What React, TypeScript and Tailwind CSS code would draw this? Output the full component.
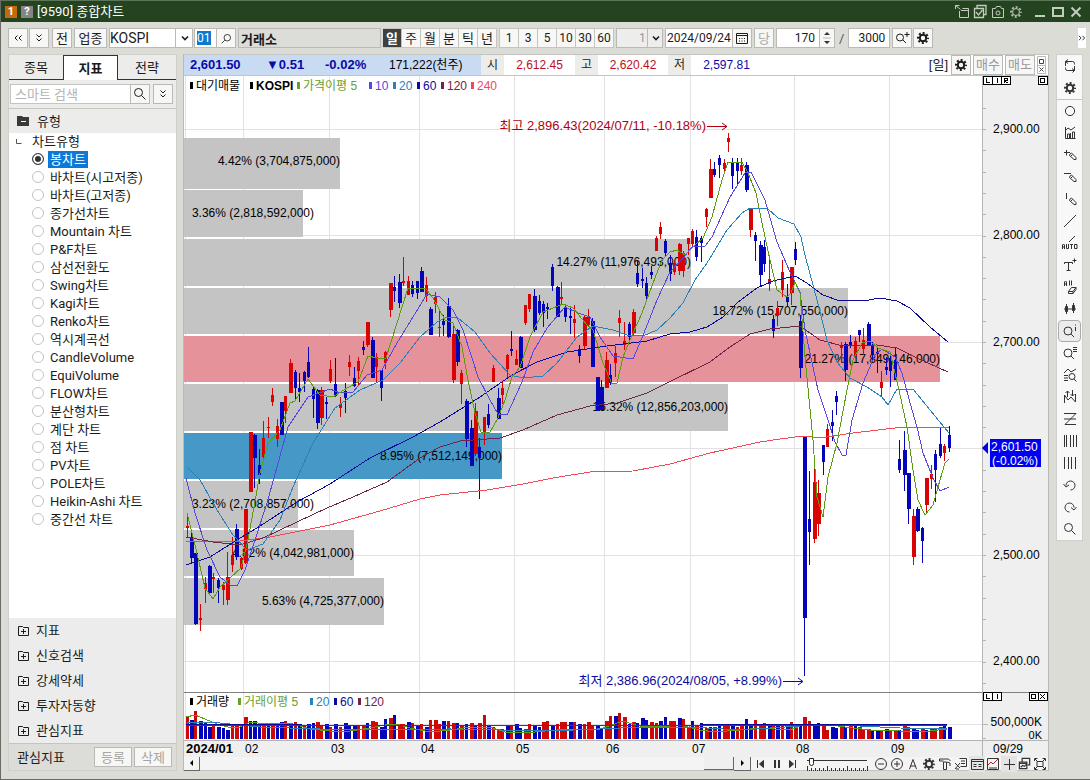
import React, { useState } from "react";

// [x, high, low, body top, body bottom, 1 = up / 0 = down]
const candles: number[][] = [
  [187, 516, 538, 526, 528, 1], [191, 529, 564, 537, 558, 0], [195, 553, 625, 553, 624, 0],
  [200, 604, 631, 618, 620, 1], [205, 577, 603, 583, 589, 1], [209, 565, 594, 566, 593, 0],
  [213, 573, 593, 577, 579, 1], [218, 578, 603, 580, 588, 0], [223, 582, 605, 585, 590, 1],
  [227, 552, 605, 577, 600, 1], [232, 537, 572, 555, 565, 1], [236, 524, 560, 529, 557, 0],
  [241, 557, 570, 558, 569, 1], [245, 509, 564, 509, 563, 1], [250, 432, 492, 432, 492, 1],
  [254, 434, 488, 435, 458, 0], [259, 449, 484, 465, 475, 0], [263, 421, 460, 438, 457, 1],
  [268, 417, 438, 427, 428, 1], [272, 388, 406, 395, 402, 1], [277, 419, 447, 426, 439, 1],
  [281, 402, 435, 402, 435, 0], [285, 396, 423, 396, 411, 1], [290, 359, 393, 363, 393, 1],
  [295, 370, 401, 372, 388, 0], [299, 373, 402, 388, 392, 0], [304, 371, 392, 372, 381, 0],
  [308, 347, 378, 362, 377, 0], [313, 387, 418, 389, 399, 0], [317, 389, 429, 390, 423, 0],
  [321, 387, 425, 390, 418, 1], [326, 397, 419, 402, 404, 0], [330, 360, 383, 369, 381, 1],
  [335, 358, 397, 384, 396, 0], [340, 397, 417, 404, 408, 1], [345, 383, 413, 391, 398, 0],
  [349, 355, 376, 362, 367, 1], [354, 367, 387, 378, 386, 0], [358, 357, 385, 361, 371, 1],
  [363, 341, 355, 347, 350, 0], [367, 322, 347, 322, 345, 1], [372, 337, 378, 340, 378, 0],
  [376, 353, 382, 357, 367, 1], [381, 370, 401, 370, 388, 0], [385, 351, 369, 352, 363, 1],
  [390, 283, 317, 283, 310, 1], [394, 276, 302, 287, 291, 0], [399, 274, 308, 282, 303, 0],
  [403, 257, 286, 281, 283, 1], [408, 276, 295, 281, 295, 1], [412, 281, 297, 285, 294, 0],
  [417, 281, 299, 281, 293, 0], [421, 267, 292, 271, 292, 0], [426, 277, 302, 285, 296, 1],
  [430, 307, 335, 309, 335, 0], [435, 292, 313, 297, 304, 1], [439, 309, 337, 327, 328, 1],
  [443, 315, 336, 321, 325, 0], [448, 298, 338, 306, 337, 0], [453, 323, 383, 334, 380, 1],
  [457, 329, 366, 330, 362, 0], [461, 370, 404, 373, 384, 1], [466, 399, 447, 401, 439, 0],
  [471, 420, 466, 428, 466, 0], [475, 403, 456, 411, 454, 1], [479, 438, 499, 447, 458, 0],
  [484, 417, 445, 417, 432, 1], [488, 404, 428, 414, 425, 0], [493, 365, 382, 368, 382, 1],
  [498, 388, 419, 398, 419, 0], [502, 382, 404, 388, 395, 1], [507, 354, 377, 355, 369, 1],
  [511, 331, 356, 349, 351, 0], [516, 350, 365, 359, 365, 1], [520, 336, 368, 337, 368, 0],
  [525, 305, 325, 305, 323, 1], [529, 294, 312, 294, 309, 1], [534, 289, 332, 296, 330, 0],
  [539, 295, 315, 301, 313, 0], [543, 301, 327, 304, 313, 0], [547, 303, 319, 307, 309, 0],
  [552, 264, 291, 267, 286, 0], [557, 286, 317, 287, 317, 0], [561, 282, 305, 297, 299, 1],
  [565, 305, 322, 307, 317, 0], [570, 308, 334, 316, 318, 0], [574, 305, 338, 319, 323, 1],
  [579, 345, 363, 349, 356, 0], [584, 315, 350, 317, 346, 1], [588, 309, 327, 317, 325, 1],
  [592, 318, 367, 321, 367, 0], [597, 377, 411, 377, 411, 0], [601, 380, 411, 387, 410, 0],
  [606, 352, 388, 360, 388, 1], [610, 364, 385, 375, 383, 0], [615, 346, 377, 353, 363, 1],
  [619, 310, 337, 318, 323, 1], [624, 322, 350, 341, 345, 1], [629, 322, 342, 324, 337, 0],
  [633, 309, 336, 312, 333, 1], [637, 260, 287, 273, 284, 0], [642, 268, 288, 279, 281, 0],
  [646, 277, 299, 283, 296, 0], [651, 266, 279, 272, 275, 0], [656, 236, 251, 238, 251, 1],
  [660, 222, 239, 227, 234, 1], [665, 239, 257, 241, 253, 0], [670, 255, 281, 263, 274, 0],
  [674, 262, 275, 263, 272, 1], [679, 243, 275, 244, 271, 1], [683, 251, 277, 253, 271, 1],
  [688, 238, 255, 238, 244, 1], [692, 229, 248, 231, 244, 1], [696, 230, 261, 237, 257, 0],
  [701, 236, 262, 238, 243, 0], [706, 208, 227, 209, 217, 1], [710, 159, 198, 169, 198, 1],
  [714, 162, 177, 169, 175, 0], [719, 155, 178, 158, 165, 0], [724, 159, 173, 163, 169, 1],
  [728, 133, 152, 138, 142, 1], [732, 158, 189, 162, 176, 0], [737, 158, 184, 162, 171, 0],
  [741, 158, 175, 165, 171, 1], [746, 162, 192, 165, 190, 0], [750, 208, 237, 209, 230, 1],
  [755, 232, 261, 235, 241, 0], [760, 241, 286, 245, 275, 0], [764, 240, 272, 247, 264, 0],
  [769, 258, 291, 279, 284, 1], [773, 315, 338, 319, 331, 0], [777, 301, 326, 308, 316, 1],
  [782, 260, 297, 272, 290, 1], [787, 284, 307, 297, 302, 0], [791, 267, 305, 267, 293, 1],
  [795, 242, 265, 249, 260, 0], [800, 315, 378, 321, 368, 0], [804, 436, 676, 437, 618, 0],
  [809, 471, 565, 519, 532, 0], [814, 457, 543, 482, 539, 1], [818, 480, 536, 493, 524, 1],
  [823, 445, 475, 445, 462, 0], [827, 424, 447, 429, 447, 1], [832, 410, 441, 422, 426, 0],
  [836, 391, 415, 396, 402, 0], [841, 342, 363, 346, 348, 1], [845, 342, 381, 344, 370, 0],
  [850, 335, 348, 342, 346, 0], [855, 337, 358, 341, 356, 1], [859, 330, 342, 330, 335, 0],
  [863, 328, 355, 340, 349, 1], [868, 322, 346, 324, 346, 0], [872, 342, 362, 346, 355, 0],
  [877, 347, 373, 352, 354, 0], [881, 371, 396, 382, 388, 1], [886, 357, 375, 367, 370, 0],
  [890, 356, 387, 358, 371, 0], [895, 347, 380, 360, 380, 0], [899, 440, 473, 459, 470, 0],
  [904, 431, 491, 450, 475, 0], [908, 473, 524, 473, 509, 0], [913, 509, 565, 516, 557, 1],
  [917, 507, 532, 509, 531, 0], [922, 527, 563, 528, 541, 0], [926, 478, 514, 478, 505, 1],
  [931, 465, 489, 474, 479, 1], [935, 450, 502, 454, 470, 0], [940, 427, 458, 444, 456, 0],
  [944, 444, 461, 446, 453, 1], [949, 426, 452, 435, 448, 0],
];

const averages = [
  {
    color: "#ee4a58",
    points:
      "186,541 240,541 270,537 330,525 380,511 420,499 440,495 487,490 523,484 553,478 590,472 633,471 670,464 710,453 760,442 780,439 803,436 820,438 853,433 903,427 949,427",
  },
  {
    color: "#70244a",
    points:
      "186,537 213,542 240,545 263,538 297,522 327,508 353,497 387,482 420,458 440,447 460,441 500,438 523,430 557,415 590,406 617,403 647,393 667,383 710,362 730,347 750,334 770,329 800,326 820,340 843,346 877,345 897,348 917,358 948,372",
  },
  {
    color: "#0c0a9c",
    points:
      "186,565 210,557 240,538 257,528 297,502 330,484 370,458 413,437 440,422 480,397 512,375 537,362 567,352 607,346 647,341 670,334 690,332 707,327 723,317 737,303 757,288 773,281 795,276 807,283 823,295 837,300 863,301 880,298 897,301 910,308 930,327 948,342",
  },
  {
    color: "#2a80b8",
    points:
      "187,467 200,480 217,510 233,535 247,550 263,544 280,520 293,487 313,443 335,408 360,390 383,380 400,363 420,337 437,322 447,317 458,318 475,332 490,353 510,375 523,378 543,376 557,363 577,337 593,326 613,330 627,335 643,336 657,330 670,318 683,303 695,280 707,263 727,230 742,213 750,208 767,208 778,218 794,224 801,237 805,255 817,300 827,340 837,362 850,378 867,387 882,397 888,405 897,389 913,389 930,410 949,433",
  },
  {
    color: "#5648dc",
    points:
      "186,478 195,513 207,550 220,577 230,585 237,586 245,570 255,540 267,503 277,467 288,427 308,397 330,389 340,393 353,392 367,375 382,370 397,343 413,317 427,294 440,297 453,310 463,330 472,358 478,377 490,400 498,414 507,415 522,382 533,352 547,328 565,307 578,313 590,317 600,337 613,356 633,359 642,338 657,300 670,272 683,258 692,247 705,246 712,237 730,197 745,173 751,172 765,200 777,242 790,272 800,292 805,330 818,390 827,417 835,442 842,455 846,455 852,420 863,383 875,355 882,349 895,357 902,373 912,410 917,427 923,453 933,478 940,491 949,487",
  },
  {
    color: "#5c9a10",
    points:
      "187,513 195,545 205,588 213,599 220,587 230,578 241,568 248,540 254,507 260,473 268,443 280,430 290,403 295,401 308,379 320,395 333,397 347,388 358,382 368,356 377,358 386,358 397,323 408,288 426,289 433,298 445,320 453,323 462,347 468,380 475,413 481,432 490,432 498,418 505,400 512,377 520,367 530,337 543,312 563,304 573,308 587,325 593,330 603,363 612,384 617,383 623,357 633,333 642,313 653,283 662,260 670,252 677,250 685,255 695,245 703,238 712,217 722,180 728,162 742,162 748,173 756,193 762,223 770,260 777,290 787,297 791,293 795,282 800,293 805,357 813,440 817,497 823,517 828,477 837,443 847,390 853,360 862,343 870,341 878,348 890,352 899,390 907,427 913,470 918,500 925,515 933,505 940,480 945,463 949,459",
  },
];

const bands = [
  { y: 138, h: 51, end: 340, textEnd: 340, label: "4.42% (3,704,875,000)", color: "#c4c4c4" },
  { y: 190, h: 47, end: 303, textEnd: 314, label: "3.36% (2,818,592,000)", color: "#c4c4c4" },
  { y: 239, h: 47, end: 691, textEnd: 691, label: "14.27% (11,976,493,000)", color: "#c4c4c4" },
  { y: 288, h: 46, end: 848, textEnd: 848, label: "18.72% (15,707,550,000)", color: "#c4c4c4" },
  { y: 336, h: 46, end: 940, textEnd: 940, label: "21.27% (17,849,146,000)", color: "#e5929b" },
  { y: 384, h: 47, end: 728, textEnd: 728, label: "15.32% (12,856,203,000)", color: "#c4c4c4" },
  { y: 433, h: 46, end: 502, textEnd: 502, label: "8.95% (7,512,149,000)", color: "#4698c6" },
  { y: 481, h: 47, end: 298, textEnd: 314, label: "3.23% (2,708,857,000)", color: "#c4c4c4" },
  { y: 530, h: 46, end: 354, textEnd: 354, label: "4.82% (4,042,981,000)", color: "#c4c4c4" },
  { y: 578, h: 47, end: 384, textEnd: 384, label: "5.63% (4,725,377,000)", color: "#c4c4c4" },
];

// bar heights in px, one per candle
const volumes: number[] = [
  23, 19, 28, 18, 16, 12, 15, 12, 11, 9, 13, 14, 15, 22, 18, 18, 13, 14, 15, 16, 13, 17, 18, 15, 17,
  15, 13, 15, 16, 17, 13, 15, 12, 15, 12, 16, 13, 13, 13, 13, 16, 18, 17, 12, 20, 21, 24, 15, 15, 17,
  16, 13, 15, 12, 19, 19, 15, 18, 18, 16, 16, 14, 15, 16, 13, 16, 24, 13, 12, 10, 10, 14, 14, 15, 11,
  10, 15, 13, 12, 17, 18, 13, 15, 17, 17, 17, 17, 15, 15, 17, 13, 13, 11, 18, 23, 23, 26, 22, 15, 17,
  16, 21, 19, 17, 16, 18, 22, 18, 18, 21, 20, 12, 18, 14, 16, 11, 12, 12, 13, 15, 14, 13, 12, 14, 20,
  14, 19, 13, 16, 15, 13, 15, 13, 12, 17, 15, 14, 22, 18, 14, 16, 14, 9, 12, 11, 12, 12, 15, 13, 12,
  10, 10, 8, 9, 9, 10, 8, 8, 9, 14, 12, 10, 9, 11, 9, 11, 11, 12, 13, 12, 6,
];
const volumeUp =
  "10100010001101000101001010100110101000110110010110101011101101010110111010011001101110101110011011010001100110110101010110110011101010110110011001010111001011011001011100110111000";

const months = [
  { x: 243, label: "02" },
  { x: 329, label: "03" },
  { x: 419, label: "04" },
  { x: 514, label: "05" },
  { x: 604, label: "06" },
  { x: 690, label: "07" },
  { x: 794, label: "08" },
  { x: 889, label: "09" },
];

const prices = [
  { y: 129, label: "2,900.00" },
  { y: 235, label: "2,800.00" },
  { y: 342, label: "2,700.00" },
  { y: 448, label: "" },
  { y: 555, label: "2,500.00" },
  { y: 661, label: "2,400.00" },
];

const priceLegend = [
  { x: 190, color: "#000000", label: "대기매물" },
  { x: 250, color: "#000000", label: "KOSPI", bold: true },
  { x: 297, color: "#6a9e2e", label: "가격이평 5" },
  { x: 369, color: "#5648dc", label: "10" },
  { x: 393, color: "#2a80b8", label: "20" },
  { x: 417, color: "#0c0a9c", label: "60" },
  { x: 441, color: "#70244a", label: "120" },
  { x: 471, color: "#ee4a58", label: "240" },
];

const volumeLegend = [
  { x: 190, color: "#000000", label: "거래량" },
  { x: 238, color: "#6a9e2e", label: "거래이평 5" },
  { x: 310, color: "#2a80b8", label: "20" },
  { x: 334, color: "#0c0a9c", label: "60" },
  { x: 358, color: "#70244a", label: "120" },
];

const chartTypes = [
  "봉차트", "바차트(시고저종)", "바차트(고저종)", "종가선차트", "Mountain 차트", "P&F차트",
  "삼선전환도", "Swing차트", "Kagi차트", "Renko차트", "역시계곡선", "CandleVolume", "EquiVolume",
  "FLOW차트", "분산형차트", "계단 차트", "점 차트", "PV차트", "POLE차트", "Heikin-Ashi 차트",
  "중간선 차트",
];

const btn = "flex h-5 shrink-0 items-center justify-center border border-[#b9b9b5] bg-[#f7f7f5]";

// 16x16 아이콘
const shapes: Record<string, React.ReactNode> = {
  gear: (
    <>
      <circle cx="8" cy="8" r="3.2" strokeWidth="2" />
      <circle cx="8" cy="8" r="5" strokeWidth="2" strokeDasharray="2 1.93" strokeDashoffset="1" />
    </>
  ),
  thinGear: (
    <>
      <circle cx="8" cy="8" r="3.5" />
      <circle cx="8" cy="8" r="5" strokeWidth="1.6" strokeDasharray="2 1.93" strokeDashoffset="1" />
    </>
  ),
  search: <path d="M6.500 2.500a4 4 0 1 1 0 8a4 4 0 1 1 0-8M9.500 9.500l4 4" />,
  searchLeft: <path d="M9 3a4 4 0 1 1 0 8a4 4 0 1 1 0-8M6 10l-4 4" />,
  searchPlus: <path d="M6 4a3.5 3.5 0 1 1 0 7a3.5 3.5 0 1 1 0-7M9 10l3 3M10.500 4.500h5M13 2v5" />,
  down: <path d="M5 6.500l3 3l3-3" strokeWidth="1.6" />,
  dblDown: <path d="M5.500 4.500l2.500 2.500l2.500-2.500M5.500 8.500l2.500 2.500l2.500-2.500" />,
  dblLeft: <path d="M7.500 5.500l-2.500 2.500l2.500 2.500M11.500 5.500l-2.500 2.500l2.500 2.500" />,
  dblRight: <path d="M4.500 5.500l2.500 2.500l-2.500 2.500M8.500 5.500l2.500 2.500l-2.500 2.500" />,
  calendar: <path d="M2.500 3.500h11v10h-11zM2.500 5.500h11M5 8.500h1M7.500 8.500h1M10 8.500h1M5 11h1M7.500 11h1M10 11h1" />,
  folder: <path d="M2.500 12.500v-9h4l1 1h5v8zM5 8.500h5M7.500 6v5" />,
  swap: <path d="M3.500 8v-4.500h7a2 2 0 0 1 2 2v1M6 1.500l-2.500 2M12.500 8v4.500h-7a2 2 0 0 1-2-2v-1M10 10.500l2.500 2l-2 2M3.500 3.500l2.500 2" />,
  circle: <circle cx="8" cy="8" r="4.6" />,
  chart: <path d="M3.500 2v11.500h10M3 6l3-3l3 2l4-3M5.500 13v-4h2v4M8.500 13v-5M10.500 13v-6h2v6" />,
  crossPen: <path d="M2 5.500h6M4.500 3v5.500M8 7l1.500-1l4.500 4.500v2h-2l-4.500-4zM9 9l1.500-1.500" />,
  linePen: <path d="M2 4.500h7M8 7l1.500-1l4.500 4.500v2h-2l-4.500-4zM9 9l1.500-1.500" />,
  barPen: <path d="M4.500 2v6M8 8l1.500-1l4.500 4.500v2h-2l-4.500-4zM9 10l1.500-1.500" />,
  line: <path d="M2 14l12-12" />,
  auto: (
    <>
      <path d="M7 7l6-6" />
      <path d="M.5 14v-4l1-1l1 1v4M.5 12h2M4.500 9v4.500h2v-4.500M8 9.500h3M9.500 9.500v4.500M12.500 9.500h2.500v4h-2.500z" />
    </>
  ),
  text: <path d="M2.500 7v-1.500h8v1.500M6.500 5.500v8M4.500 13.500h4M10.500 3.500h4M12.500 1.500v4" />,
  all: <path d="M2.500 7v-4l1-1l1 1v4M2.500 5h2M7.500 1.500v5M9.500 1.500v5M6.500 12.500l3-4h4.500l-3 4zM6.500 12.500v2h4.500l3-4v-2M11 12.500v2" />,
  candle: (
    <>
      <path d="M4.500 3v10M11.500 2v10" />
      <path d="M3.500 5.500h2v5h-2zM10.500 4.500h2v5h-2zM2 8h12" fill="currentColor" />
    </>
  ),
  info: <path d="M6 4a4 4 0 1 1 0 8a4 4 0 1 1 0-8M9 11l3 3M13.500 4v4M13.500 1.500v1" />,
  list: <path d="M6 4a4 4 0 1 1 0 8a4 4 0 1 1 0-8M9 11l3 3M11 2.500h4M11 4.500h4M11 6.500h4" />,
  searchWave: <path d="M2 6l4-4l3 3l5-3M2 8.500h4M2 11h4M2 13.500h4M10 6.500a3 3 0 1 1 0 6a3 3 0 1 1 0-6M12 12l2.500 2.500" />,
  arrowsWave: <path d="M2.500 14v-8l3.500 5l3-3l4.500 5v-8M5.500 8v-6M3.500 4l2-2l2 2M10.500 1v6M8.500 5l2 2l2-2" />,
  zig: <path d="M2 2.500h12l-11 11h11M2 8h12" />,
  bars: <path d="M2.500 2v12M4.500 2v12M8.500 2v12M11.500 2v12M14.500 2v12" />,
  bars4: <path d="M2.500 2v12M6.500 2v12M9.500 2v12M13.500 2v12" />,
  undo: <path d="M4 8.500a4.500 4.500 0 1 1 4.500 4.500M1.500 7l2.500 3l3-2" />,
  redo: <path d="M12 8.500a4.500 4.500 0 1 0-4.500 4.500M14.500 8l-2.500 3l-3-2.500" />,
  minus: <path d="M8 2.500a5.500 5.500 0 1 1 0 11a5.500 5.500 0 1 1 0-11M5 8h6" />,
  plus: <path d="M8 2.500a5.500 5.500 0 1 1 0 11a5.500 5.500 0 1 1 0-11M5 8h6M8 5v6" />,
  letter: <path d="M4.500 13l3.500-9.500l3.500 9.500M5.500 10h5" />,
  tools: <path d="M2.500 5v-2h9l2 2M6.500 6h3v7.500h-3zM2.500 5h4M10 6l3 1v3" />,
  memo: <path d="M6.500 2.500h7v8h-6M8 5h4M8 7.500h4M2 7l5 5M7 7l-5 6M3 13h3" />,
  table: <path d="M2.500 3.500h12v10h-12zM2.500 5.500h12M4.500 8.500h3M4.500 10.500h3M9.500 8.500h3M9.500 10.500h3" />,
  trend: (
    <>
      <path d="M2.500 2.500h11v11h-11zM4 12h8" />
      <path d="M3 9l3-3l2 2l5-5" stroke="#c02030" />
    </>
  ),
  cross: <path d="M8.500 3v11M3 8.500h11" />,
  windows: <path d="M5.500 6v-3.500h8v7h-2M2.500 6.500h8v7h-8zM2.500 8h8M4 12l2-2l2 1l2-2" strokeWidth="1.3" />,
  expand: <path d="M2.500 5v-2.500h3M10.500 2.500h3v2.500M13.500 11v2.500h-3M5.500 13.500h-3v-2.500M5 5.500h6v5h-6zM3 3l2 2M13 3l-2 2M3 13l2-2M13 13l-2-2" />,
  dock: <path d="M5.500 7v6.500h9v-9h-6M7 6.500h7M1.500 1.500l5 4M1.500 5v-3.500h4" />,
  copyCheck: <path d="M5 4v-2.500h9v9h-2.500M2.500 4.500h9v9h-9zM4 8l2.500 3l4-5" strokeWidth="1.3" />,
  camera: <path d="M2.500 4.500h3l1-2h4l1 2h2v9h-11zM8 7a2 2 0 1 1 0 4a2 2 0 1 1 0-4" />,
  min: <path d="M3 12h10" strokeWidth="2" />,
  max: <path d="M3 4h10v8h-10z" strokeWidth="2" />,
  close: <path d="M3.500 3.500l9 9M12.500 3.500l-9 9" strokeWidth="2" />,
  first: <path d="M4.500 4v8M6.500 8l4-3.500v7z" fill="currentColor" />,
  pause: <path d="M6 4v8M10 4v8" strokeWidth="2" />,
  last: <path d="M10.500 4v8M8.500 8l-4-3.500v7z" fill="currentColor" />,
};

const Icon = ({ name, size = 16 }: { name: string; size?: number }) => (
  <svg width={size} height={size} viewBox="0 0 16 16" fill="none" stroke="currentColor" className="shrink-0">
    {shapes[name]}
  </svg>
);

const tools = [
  "circle", "chart", "crossPen", "linePen", "barPen", "line", "auto", "text", "all", "candle", "info",
  "list", "searchWave", "arrowsWave", "zig", "bars", "bars4", "undo", "redo", "search",
];

const volumeAverages = [
  {
    color: "#5c9a10",
    points:
      "186,717 195,715 205,719 217,724 228,727 240,727 250,722 265,724 290,723 310,729 330,731 350,731 370,728 385,725 397,724 410,728 430,732 450,730 470,727 490,727 505,732 525,733 545,731 570,729 600,729 615,724 622,721 640,726 660,727 680,725 700,730 715,732 740,730 760,728 790,730 805,724 825,724 845,727 870,730 900,731 930,731 947,729",
  },
  { color: "#2a80b8", points: "186,722 220,723 260,727 350,730 450,729 550,731 620,728 690,727 740,730 830,724 860,726 900,728 947,729" },
  { color: "#0c0a9c", points: "186,724 300,725 600,726 700,725 947,724" },
  { color: "#70244a", points: "186,725 500,726 700,725 947,726" },
];

const Legend = ({ items, y }: { items: any[]; y: number }) => (
  <>
    {items.map((v) => (
      <g key={v.x} fill={v.color}>
        <rect x={v.x} y={y - 4} width="3" height="7" />
        <text x={v.x + 6} y={y + 4} fontSize={12} fontWeight={v.bold ? 700 : 400}>
          {v.label}
        </text>
      </g>
    ))}
  </>
);

const SmallBox = ({ x, y, kind }: { x: number; y: number; kind: string }) => (
  <g stroke="#000" fill="#fff" shapeRendering="crispEdges">
    <rect x={x + 0.5} y={y + 0.5} width="9" height="8" />
    {kind === "L" && <path d={`M${x + 3.5} ${y + 2}v4.500h3`} fill="none" />}
    {kind === "I" && <path d={`M${x + 5.5} ${y + 2}v5`} fill="none" />}
    {kind === "R" && <path d={`M${x + 3.5} ${y + 7}v-4.500h3v2h-3l3 2.500`} fill="none" />}
    {kind === "box" && <rect x={x + 2.5} y={y + 2.5} width="4" height="4" />}
    {kind === "x" && <path d={`M${x + 2} ${y + 2}l5 5M${x + 7} ${y + 2}l-5 5`} fill="none" />}
  </g>
);

const Chart = () => (
  <svg
    viewBox="184 76 864 681"
    className="block h-auto w-full bg-white font-['Liberation_Sans','Noto_Sans_CJK_KR',sans-serif]"
    fontSize={12}
  >
    <g stroke="#e2e2e2" shapeRendering="crispEdges">
      {months.map((v) => (
        <path key={v.x} d={`M${v.x + 0.5} 76V740`} />
      ))}
      {prices.map((v) => (
        <path key={v.y} d={`M184 ${v.y + 0.5}H983`} />
      ))}
      <path d="M184 724.500H983M185.500 76V740" />
    </g>
    {bands.map((v) => (
      <rect key={v.y} x="184" y={v.y} width={v.end - 184} height={v.h} fill={v.color} />
    ))}
    {bands.map((v) => (
      <text key={v.y} x={v.textEnd} y={v.y + 27} textAnchor="end">
        {v.label}
      </text>
    ))}
    <g shapeRendering="crispEdges">
      {candles.map((v) => (
        <g key={v[0]} fill={v[5] ? "#d80404" : "#0404b8"}>
          <rect x={v[0]} y={v[1]} width="1" height={v[2] - v[1]} />
          <rect x={v[0] - 1} y={v[3]} width={v[4] - v[3] > 20 ? 4 : 3} height={v[4] - v[3]} />
        </g>
      ))}
      {averages.map((v) => (
        <polyline key={v.color} points={v.points} fill="none" stroke={v.color} />
      ))}
    </g>
    <text x="706" y="130" fill="#b00010" fontSize={13} textAnchor="end">
      최고 2,896.43(2024/07/11, -10.18%)
    </text>
    <path d="M707 126.500h20M722 123l5 3.500l-5 3.500" fill="none" stroke="#b00010" />
    <text x="782" y="685" fill="#0c0a9c" fontSize={13} textAnchor="end">
      최저 2,386.96(2024/08/05, +8.99%)
    </text>
    <path d="M783 681.500h19M798 678l5 3.500l-5 3.500" fill="none" stroke="#0c0a9c" />
    <Legend items={priceLegend} y={86} />

    {/* 거래량 */}
    <path d="M184 692.500H1048" stroke="#808080" />
    <Legend items={volumeLegend} y={702} />
    <g shapeRendering="crispEdges">
      {candles.map((v, i) => (
        <rect
          key={v[0]}
          x={v[0] - 1}
          y={739 - volumes[i]}
          width={i % 2 ? 4 : 3}
          height={volumes[i]}
          fill={volumeUp[i] === "1" ? "#cc0808" : "#0404b8"}
        />
      ))}
      {volumeAverages.map((v) => (
        <polyline key={v.color} points={v.points} fill="none" stroke={v.color} />
      ))}
    </g>

    {/* 축 */}
    <rect x="983" y="76" width="65" height="616" fill="#efefef" />
    <rect x="983" y="693" width="65" height="64" fill="#efefef" />
    <rect x="184" y="740" width="799" height="17" fill="#efefef" />
    <path d="M982.500 76V757M184 740.500H1048" stroke="#b4b4b4" />
    <g stroke="#b4b4b4" shapeRendering="crispEdges">
      {Array.from({ length: 28 }, (_, i) => Math.round(107.7 + i * 21.3)).map((y) => (
        <path key={y} d={`M983 ${y + 0.5}h3`} />
      ))}
      <path d="M983 724.500h5M983 738.500h3" />
    </g>
    {prices.map((v) => (
      <text key={v.y} x="993" y={v.y + 4}>
        {v.label}
      </text>
    ))}
    <path d="M982 448l6-6v12z" fill="#0000e8" />
    <rect x="990" y="439" width="51" height="28" fill="#0000f0" />
    <g fill="#fff">
      <text x="991" y="451">2,601.50</text>
      <text x="992" y="465">(-0.02%)</text>
    </g>
    <text x="1042" y="726" textAnchor="end">500,000K</text>
    <text x="1042" y="739" textAnchor="end" fontSize={11}>0K</text>
    <text x="186" y="753" fontWeight={700} fontSize={13}>2024/01</text>
    {months.map((v) => (
      <text key={v.x} x={v.x + 2} y="753">
        {v.label}
      </text>
    ))}
    <text x="993" y="753">09/29</text>
    <SmallBox x={983} y={76} kind="L" />
    <SmallBox x={992} y={76} kind="I" />
    <SmallBox x={1001} y={76} kind="R" />
    <SmallBox x={1038} y={76} kind="box" />
    <SmallBox x={983} y={692} kind="L" />
    <SmallBox x={992} y={692} kind="I" />
    <SmallBox x={1029} y={692} kind="box" />
    <SmallBox x={1038} y={692} kind="x" />
  </svg>
);

const Toolbar = () => {
  const [period, setPeriod] = useState<string>("일");

  return (
    <div className="flex h-8 items-center pr-1 pl-[7px]">
      <button className={`${btn} w-5`} aria-label="이전">
        <Icon name="dblLeft" />
      </button>
      <button className={`${btn} ml-px w-5`} aria-label="펼치기">
        <Icon name="dblDown" />
      </button>
      <button className={`${btn} ml-[3px] w-5`}>전</button>
      <button className={`${btn} ml-0.5 w-[33px]`}>업종</button>
      <div className="relative ml-0.5 w-[84px] shrink-0">
        <select aria-label="시장" className="h-5 w-full appearance-none border border-[#b9b9b5] bg-white text-sm leading-none">
          <option>KOSPI</option>
        </select>
        <span className="pointer-events-none absolute top-0 right-0 flex h-5 w-[18px] items-center justify-center border-l border-[#b9b9b5]">
          <Icon name="down" />
        </span>
      </div>
      <div className="ml-px flex h-5 w-[23px] shrink-0 items-center border border-[#b9b9b5] bg-white pl-0.5">
        <input aria-label="업종코드" defaultValue="01" className="h-3.5 w-3.5 bg-[#0c78d0] text-xs text-white" />
      </div>
      <button className={`${btn} -ml-px w-5`} aria-label="종목검색">
        <Icon name="searchLeft" size={13} />
      </button>
      <input
        aria-label="종목명"
        readOnly
        defaultValue="거래소"
        className="ml-0.5 h-5 w-[143px] shrink-0 border border-[#b9b9b5] bg-[#dcdcd8] px-0.5 text-[13px] font-bold"
      />
      <div className="ml-0.5 flex">
        {["일", "주", "월", "분", "틱", "년"].map((v) => (
          <button
            key={v}
            onClick={() => setPeriod(v)}
            className={`h-5 w-[19px] border-y border-r border-[#c4c4c0] ${
              period === v ? "bg-[#404040] font-bold text-white" : "bg-[#f7f7f5]"
            }`}
          >
            {v}
          </button>
        ))}
      </div>
      <div className="ml-0.5 flex border-l border-[#c4c4c0] text-xs">
        {["1", "3", "5", "10", "30", "60"].map((v) => (
          <button key={v} className="h-5 w-[19px] border-y border-r border-[#c4c4c0] bg-[#f7f7f5]">
            {v}
          </button>
        ))}
      </div>
      <div className="relative ml-0.5 w-[47px] shrink-0">
        <select aria-label="분 단위" className="h-5 w-full appearance-none border border-[#b9b9b5] bg-[#ededeb] pl-[22px] text-xs text-[#999]">
          <option>1</option>
        </select>
        <span className="pointer-events-none absolute top-0 right-0 flex h-5 w-4 items-center justify-center border-l border-[#b9b9b5]">
          <Icon name="down" />
        </span>
      </div>
      <input aria-label="날짜" defaultValue="2024/09/24" className="ml-0.5 h-5 w-[68px] border border-[#b9b9b5] bg-white px-px text-xs" />
      <button className={`${btn} -ml-px w-5`} aria-label="달력">
        <Icon name="calendar" />
      </button>
      <button className={`${btn} ml-0.5 w-5 text-[#aaa]`}>당</button>
      <input aria-label="표시 개수" defaultValue="170" className="ml-0.5 h-5 w-[44px] border border-[#b9b9b5] bg-white px-1 text-right text-xs" />
      <button className={`${btn} -ml-px w-4`} aria-label="개수 조절">
        <svg width="8" height="16" fill="#333">
          <path d="M1 5l3-3l3 3zM1 11l3 3l3-3z" />
          <path d="M0 8h8" stroke="#b9b9b5" />
        </svg>
      </button>
      <span className="mx-1 text-[#555]">/</span>
      <input aria-label="전체 개수" defaultValue="3000" className="h-5 w-[42px] border border-[#b9b9b5] bg-white px-1 text-right text-xs" />
      <button className={`${btn} ml-0.5 w-5`} aria-label="확대">
        <Icon name="searchPlus" />
      </button>
      <button className={`${btn} ml-px w-5`} aria-label="설정">
        <Icon name="gear" />
      </button>
      <button className="ml-auto flex h-5 w-2 items-center justify-center bg-white" aria-label="더보기">
        <Icon name="dblRight" size={14} />
      </button>
    </div>
  );
};

const SidePanel = () => {
  const [selected, setSelected] = useState<string>("봉차트");

  return (
    <div className="flex w-[169px] shrink-0 flex-col border border-[#cfcfcb] bg-[#dcdcd8]">
      <div className="flex h-[25px] shrink-0 text-[13px]">
        <button className="w-[54px] border-b border-[#333] bg-[#ececea]">종목</button>
        <button className="w-[55px] border border-b-0 border-[#333] bg-white font-bold">지표</button>
        <button className="flex-1 border-b border-[#333] bg-[#ececea]">전략</button>
      </div>
      <div className="flex h-7 shrink-0 items-center bg-[#ececea] px-px">
        <input
          aria-label="스마트 검색"
          placeholder="스마트 검색"
          className="h-5 min-w-0 flex-1 border border-[#c4c4c0] bg-white px-1 text-[13px] placeholder:text-[#b4b4b4]"
        />
        <button className={`${btn} -ml-px w-5`} aria-label="검색">
          <Icon name="search" />
        </button>
        <button className={`${btn} mr-0.5 ml-[3px] w-5`} aria-label="펼치기">
          <Icon name="dblDown" />
        </button>
      </div>
      <button className="flex h-[25px] shrink-0 items-center gap-2 border-t border-[#c4c4c0] bg-[#ececea] pl-2 text-[13px]">
        <svg width="12" height="12">
          <path d="M0 1h5l1 1h6v9H0z" fill="#3a3a3a" />
          <path d="M4 6.500h5" stroke="#fff" />
        </svg>
        유형
      </button>
      <div className="flex-1 bg-white text-[13px]">
        <p className="flex h-[17px] items-center">
          <svg width="23" height="12">
            <path d="M7.500 3v4.500h5" fill="none" stroke="#555" />
          </svg>
          차트유형
        </p>
        {chartTypes.map((v) => (
          <label key={v} className="flex h-[18px] items-center gap-1 pl-[23px]">
            <input
              type="radio"
              name="chartType"
              checked={selected === v}
              onChange={() => setSelected(v)}
              className="size-3 appearance-none rounded-full border border-[#c4c4c4] bg-white checked:border-[#444] checked:bg-[#333] checked:shadow-[inset_0_0_0_2px_#fff]"
            />
            <span className={`px-0.5 leading-[17px] ${selected === v ? "bg-[#0c78d8] text-white" : ""}`}>{v}</span>
          </label>
        ))}
      </div>
      <div className="bg-[#ececec] text-[13px]">
        {["지표", "신호검색", "강세약세", "투자자동향", "관심지표"].map((v) => (
          <button key={v} className="flex h-[25px] w-full items-center gap-1 pl-[7px]">
            <Icon name="folder" />
            {v}
          </button>
        ))}
      </div>
      <div className="flex h-[27px] shrink-0 items-center gap-0.5 border-t border-[#c4c4c0] pr-1 pl-2 text-[13px]">
        <span className="flex-1">관심지표</span>
        <button className={`${btn} w-[38px] text-[#a4a4a0]`}>등록</button>
        <button className={`${btn} w-[38px] text-[#a4a4a0]`}>삭제</button>
      </div>
    </div>
  );
};

const QuoteBar = () => (
  <div className="flex h-[22px] items-center border-y border-[#c4c4c0] bg-white font-['Liberation_Sans','Noto_Sans_CJK_KR',sans-serif] text-xs">
    <div className="flex h-full w-[297px] items-center bg-[#c9dbf3] pl-1.5 text-[13px] font-bold text-[#0a0aa8]">
      <span className="w-[76px]">2,601.50</span>
      <span className="w-[59px]">▼0.51</span>
      <span className="w-[64px]">-0.02%</span>
      <span className="text-xs font-normal text-black">171,222(천주)</span>
    </div>
    <span className="flex h-full w-[23px] items-center justify-center bg-[#ececea]">시</span>
    <span className="w-[71px] text-center text-[#b81020]">2,612.45</span>
    <span className="flex h-full w-[23px] items-center justify-center bg-[#ececea]">고</span>
    <span className="w-[70px] text-center text-[#b81020]">2,620.42</span>
    <span className="flex h-full w-[23px] items-center justify-center bg-[#ececea]">저</span>
    <span className="w-[71px] text-center text-[#0a0aa8]">2,597.81</span>
    <div className="ml-auto flex items-center gap-0.5 pr-0.5 text-[13px]">
      <span className="mr-px">[일]</span>
      <button className={`${btn} w-5`} aria-label="설정">
        <Icon name="gear" />
      </button>
      <button className={`${btn} w-[30px] text-[#999]`}>매수</button>
      <button className={`${btn} w-[30px] text-[#999]`}>매도</button>
      <svg width="9" height="18" fill="none" stroke="#444">
        <path d="M.5.5h8v17h-8zM0 9.500h9" stroke="#b9b9b5" />
        <path d="M2.500 3.500h4v4h-4zM2.500 11.500l4 4M6.500 11.500l-4 4" />
      </svg>
    </div>
  </div>
);

const BottomBar = () => (
  <div className="flex h-3.5 items-center border-b border-[#c4c4c0] bg-[#f4f4f4]">
    <button className="flex h-3.5 w-4 items-center justify-center border-r border-b border-[#666]" aria-label="왼쪽으로">
      <svg width="5" height="7">
        <path d="M4 0v6l-3-3z" />
      </svg>
    </button>
    <div className="flex h-full flex-1 justify-end">
      <div className="h-full w-[30px] border-r border-b border-[#666] bg-[#efefef]" />
    </div>
    <button className="flex h-3.5 w-[17px] items-center justify-center border-r border-b border-[#666] bg-[#efefef]" aria-label="오른쪽으로">
      <svg width="5" height="7">
        <path d="M1 0v6l3-3z" />
      </svg>
    </button>
    <div className="flex w-[50px] justify-end text-[#333]">
      {["first", "pause", "last"].map((v) => (
        <button key={v} aria-label={v}>
          <Icon name={v} />
        </button>
      ))}
    </div>
    <div className="relative ml-1.5 h-3.5 w-[62px]">
      <svg width="62" height="14" className="absolute inset-0" stroke="#333" shapeRendering="crispEdges">
        <path d="M0 3.500h60" />
        {Array.from({ length: 16 }, (_, i) => (
          <path key={i} d={`M${i * 4 + 0.5} 13v${i % 5 ? -2 : -4}`} />
        ))}
        <path d="M0 13.500h61" strokeDasharray="1 1" />
      </svg>
      <input
        type="range"
        aria-label="속도"
        defaultValue={4}
        className="absolute inset-x-0 top-0 h-2.5 w-full appearance-none bg-transparent [&::-webkit-slider-thumb]:h-2 [&::-webkit-slider-thumb]:w-[5px] [&::-webkit-slider-thumb]:appearance-none [&::-webkit-slider-thumb]:rounded-b-sm [&::-webkit-slider-thumb]:border [&::-webkit-slider-thumb]:border-[#222] [&::-webkit-slider-thumb]:bg-white"
      />
    </div>
    <div className="ml-1 flex text-[#333]">
      {["minus", "plus", "letter", "gear", "tools", "memo", "table", "trend", "cross", "windows", "expand"].map((v) => (
        <button key={v} aria-label={v} className={v === "table" || v === "cross" ? "bg-[#e4e4e4]" : ""}>
          <Icon name={v} size={v === "windows" ? 15 : 16} />
        </button>
      ))}
    </div>
  </div>
);

const App: React.FC = () => {
  return (
    <div className="flex min-h-screen flex-col border-b border-l border-[#6a6a66] bg-[#dcdcd6] font-[Roboto,'Noto_Sans_CJK_KR',sans-serif] text-[13px] leading-none text-[#1c1c1c]">
      <div className="flex h-[22px] shrink-0 items-center gap-1 border-t border-[#5c7458] bg-[#24431f] pr-1.5 pl-1 text-white">
        <span className="flex size-3 items-center justify-center bg-[#c46a08] text-[11px] font-bold">1</span>
        <span className="flex size-3 items-center justify-center bg-[#858585] text-[11px] font-bold">?</span>
        <span className="flex-1">[9590] 종합차트</span>
        <div className="flex items-center gap-0.5 text-[#c4ccc0]">
          {["dock", "copyCheck", "camera", "thinGear"].map((v) => (
            <button key={v} aria-label={v}>
              <Icon name={v} />
            </button>
          ))}
          <span className="w-1" />
          {["min", "max", "close"].map((v) => (
            <button key={v} aria-label={v}>
              <Icon name={v} />
            </button>
          ))}
        </div>
      </div>

      <Toolbar />

      <div className="flex flex-1 items-stretch pr-[7px] pb-2 pl-[7px]">
        <SidePanel />
        <div className="ml-1.5 min-w-0 flex-1 border-x border-[#b9b9b5]">
          <QuoteBar />
          <Chart />
          <BottomBar />
        </div>
        <div className="ml-[7px] flex w-[27px] shrink-0 flex-col items-center self-start border border-[#cfcfcb] bg-[#f8f8f8] text-[#333]">
          {["swap", "gear"].map((v) => (
            <button key={v} aria-label={v} className="flex h-[22px] items-center">
              <Icon name={v} />
            </button>
          ))}
          <div className="h-px w-full bg-[#c4c4c0]" />
          {tools.map((v) => (
            <button
              key={v}
              aria-label={v}
              className={`flex h-[22px] w-[23px] items-center justify-center ${
                v === "info" ? "rounded-sm border border-[#aaa] bg-[#ececec]" : ""
              }`}
            >
              <Icon name={v} />
            </button>
          ))}
        </div>
      </div>
    </div>
  );
};

export default App;
